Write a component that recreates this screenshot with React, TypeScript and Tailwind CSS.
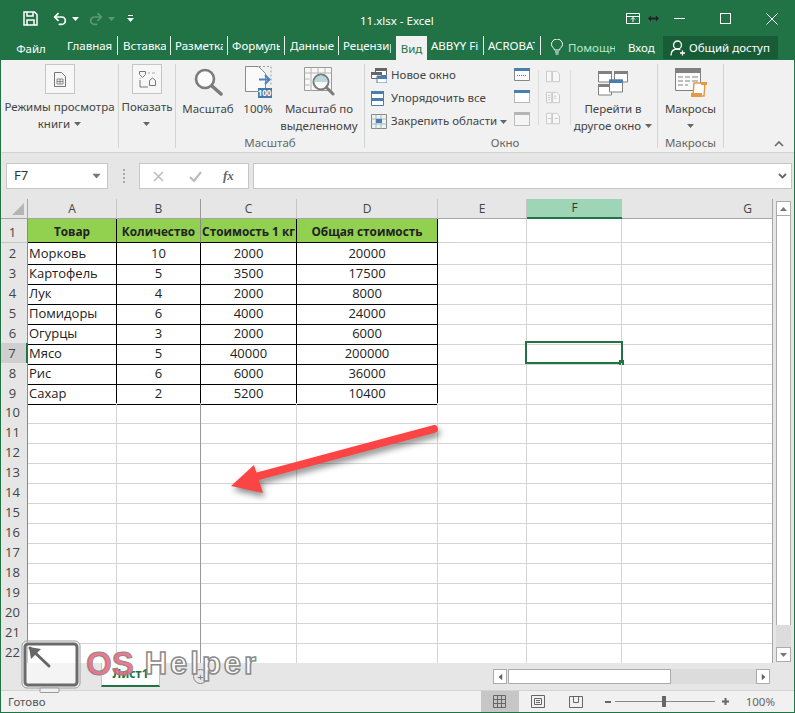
import { Redo2, Undo2 } from "lucide-react";
import type { ReactNode } from "react";

const tabs = [
  { name: "Главная", box: "w-[56px]", inner: "ml-[5px] mr-[5px]" },
  { name: "Вставка", box: "w-[53px]", inner: "ml-[5px] mr-[4px]" },
  { name: "Разметка", box: "w-[57px]", inner: "ml-[4px] mr-[4px]" },
  { name: "Формулы", box: "w-[57px]", inner: "ml-[4px] mr-[4px]" },
  { name: "Данные", box: "w-[54px]", inner: "ml-[5px] mr-[4px]" },
];

const rows: [string, number, number, number][] = [
  ["Морковь", 10, 2000, 20000],
  ["Картофель", 5, 3500, 17500],
  ["Лук", 4, 2000, 8000],
  ["Помидоры", 6, 4000, 24000],
  ["Огурцы", 3, 2000, 6000],
  ["Мясо", 5, 40000, 200000],
  ["Рис", 6, 6000, 36000],
  ["Сахар", 2, 5200, 10400],
];

const gridCols = "grid grid-cols-[27px_89px_84px_96px_141px_89px_95px_151px]";
const soft = "border-r border-b border-[#d4d4d4]";
const hard = "border-r border-b border-black";
const softLast = "border-r border-b border-r-[#d4d4d4] border-b-[#a6a6a6]";
const groupLabel = "mt-auto -mb-[2px] text-center text-[11.5px] leading-[15px] text-[#666]";

function Caret({ className = "" }: { className?: string }) {
  return (
    <svg width="7" height="4" viewBox="0 0 7 4" className={className}>
      <path d="M0 0h7L3.500 4z" fill="currentColor" />
    </svg>
  );
}

function ViewIcon() {
  return (
    <div className="flex h-[30px] w-[30px] items-center justify-center border border-[#c6c6c6] bg-[#f7f7f7]">
      <svg width="12" height="15" viewBox="0 0 12 15" fill="none" stroke="#777">
        <path d="M.5.500h7l4 4v10H.5z" />
        <path d="M3 7h6v5H3zM6 7v5M3 9.500h6" stroke="#888" />
      </svg>
    </div>
  );
}

function ShowIcon() {
  return (
    <div className="flex h-[30px] w-[30px] items-center justify-center border border-[#c6c6c6] bg-[#f7f7f7]">
      <svg width="17" height="17" viewBox="0 0 17 17" fill="none" stroke="#777">
        <path d="M.5.500h6v3L3.500 6.500.5 3.500zM10.500 9.500l3-2.500 3 2.500v5h-6zM1 9v7h8" />
        <path d="M9 2h2M13 2h3M1 7v1" stroke="#aaa" />
      </svg>
    </div>
  );
}

function ZoomIcon() {
  return (
    <svg width="29" height="28" viewBox="0 0 29 28" fill="none">
      <circle cx="11" cy="11" r="9" stroke="#7b7b7b" strokeWidth="2.600" fill="#fbfbfb" />
      <path d="M18 18l9 8" stroke="#7b7b7b" strokeWidth="3.400" strokeLinecap="round" />
    </svg>
  );
}

function HundredIcon() {
  return (
    <div className="relative h-[32px] w-[27px]">
      <svg width="27" height="32" viewBox="0 0 27 32" fill="none">
        <path d="M.5.500h13l7 7v18H.5z" stroke="#8a8a8a" fill="#fafafa" />
        <path d="M14 .5h12v20" stroke="#9a9a9a" strokeDasharray="2 2" />
        <path d="M14 13.500h10M20 9l4.500 4.500L20 18" stroke="#4a86bd" strokeWidth="2" />
      </svg>
      <span className="absolute right-0 bottom-0 flex h-[10px] w-[14px] items-center justify-center bg-[#4778a8] text-[8px] leading-none font-bold text-white">
        100
      </span>
    </div>
  );
}

function ZoomSelectionIcon() {
  return (
    <svg width="31" height="30" viewBox="0 0 31 30" fill="none">
      <path d="M.5.500h27v23H.5z" stroke="#9a9a9a" fill="#f7f7f7" />
      <path d="M.5 6h27M7 .5v23M14 .5v6M21 .5v6M.5 12h5M.5 18h5" stroke="#b4b4b4" />
      <circle cx="17" cy="15" r="7.500" stroke="#7b7b7b" strokeWidth="2" fill="#fafafa" />
      <path d="M10.500 15a6.500 6.500 0 0 1 13 0z" fill="#b9d7df" />
      <path d="M22.500 20.500l6.500 6.500" stroke="#7b7b7b" strokeWidth="3" strokeLinecap="round" />
    </svg>
  );
}

function NewWindowIcon() {
  return (
    <svg width="16" height="15" viewBox="0 0 16 15" fill="none">
      <path d="M4.500.5h11v7h-11z" stroke="#666" fill="#fff" />
      <path d="M4 0h12v3H4z" fill="#666" />
      <path d="M.5 4.500h10v6H.5z" stroke="#666" fill="#fff" />
      <path d="M0 4h11v3H0z" fill="#666" />
      <path d="M6 8h10v7H6z" fill="#fff" stroke="#4a7eb0" />
      <path d="M6 8h10v3H6z" fill="#4a7eb0" />
    </svg>
  );
}

function ArrangeIcon() {
  return (
    <svg width="13" height="15" viewBox="0 0 13 15" fill="none">
      <path d="M.5.500h12v14H.5z" stroke="#4a7eb0" fill="#fff" />
      <path d="M0 0h13v3H0zM0 7h13v3H0z" fill="#4a7eb0" />
    </svg>
  );
}

function FreezeIcon() {
  return (
    <svg width="16" height="15" viewBox="0 0 16 15" fill="none">
      <path d="M.5.500h15v14H.5z" stroke="#888" fill="#eef4f6" />
      <path d="M.5 5h15M.5 10h15M5 .5v14M10 .5v14" stroke="#a8b4b8" />
      <path d="M5 5h6v4H5z" fill="#4a7eb0" />
    </svg>
  );
}

function SplitTopIcon({ dotted }: { dotted?: boolean }) {
  return (
    <svg width="16" height="13" viewBox="0 0 16 13" fill="none">
      <path d="M.5.500h15v12H.5z" stroke={dotted ? "#777" : "#888"} fill="#fff" strokeDasharray={dotted ? "1 1" : undefined} />
      <path d="M0 0h16v3H0z" fill="#4a7eb0" />
      {!dotted && <path d="M3 7.500h10" stroke="#4a7eb0" strokeDasharray="1 1" />}
    </svg>
  );
}

function GrayWindowIcon() {
  return (
    <svg width="16" height="14" viewBox="0 0 16 14" fill="none">
      <path d="M.5.500h15v13H.5z" stroke="#bbb" fill="#f5f5f5" />
      <path d="M0 0h16v3H0z" fill="#b5b5b5" />
    </svg>
  );
}

function PagesIcon({ kind }: { kind: number }) {
  return (
    <svg width="16" height="15" viewBox="0 0 16 15" fill="none" stroke="#c4c4c4">
      <path d="M.5 1.500h6v12h-6zM7.500 1.500h5l3 3v9h-8z" fill="#f7f7f7" />
      {kind === 1 && <path d="M2 5h3M2 7.500h3M2 10h3M9 6h3M9 8.500h3" />}
      {kind === 2 && <path d="M2 7.500h4M10 7.500h4" />}
    </svg>
  );
}

function SwitchWindowIcon() {
  return (
    <svg width="30" height="26" viewBox="0 0 30 26" fill="none">
      <path d="M.5 1h13v10H.5zM16.500 1h13v10h-13zM.5 14h13v10H.5z" stroke="#808080" fill="#fff" />
      <path d="M0 0h14v3H0zM16 0h14v3H16zM0 13h14v3H0z" fill="#808080" />
      <path d="M11.500 9h13v12h-13z" stroke="#808080" fill="#fff" strokeWidth="1" />
      <path d="M11 8.500h14v3.500H11z" fill="#4a7eb0" />
    </svg>
  );
}

function MacroIcon() {
  return (
    <svg width="32" height="29" viewBox="0 0 32 29" fill="none">
      <path d="M.5.500h25v22H.5z" stroke="#808080" fill="#fafafa" />
      <path d="M0 0h26v5H0z" fill="#808080" />
      <path d="M3 9h5M10 9h5M17 9h6M3 13h5M10 13h5M17 13h6M3 17h5M10 17h3" stroke="#aaa" strokeWidth="1.500" />
      <path d="M19 15h11l-1 13H18z" fill="#fff" stroke="#e39a45" strokeWidth="1.500" />
      <path d="M16 25h11v4H16z" fill="#e39a45" />
      <path d="M26 14h6v3h-6z" fill="#e39a45" />
    </svg>
  );
}

function BigButton({ box, icon, top, bottom, caret, iconBox = "h-[36px]" }: { box: string; icon: ReactNode; top: string; bottom?: string; caret?: boolean; iconBox?: string }) {
  return (
    <div className={`flex flex-col items-center ${box}`}>
      <div className={`flex items-center justify-center ${iconBox}`}>{icon}</div>
      <div className="text-center text-[11.5px] leading-[17px] whitespace-nowrap">
        <div>{top}</div>
        {bottom && (
          <div className="flex items-center justify-center gap-[4px]">
            {bottom}
            {caret && <Caret className="text-[#666]" />}
          </div>
        )}
        {!bottom && caret && (
          <div className="flex h-[17px] items-center justify-center">
            <Caret className="text-[#666]" />
          </div>
        )}
      </div>
    </div>
  );
}

function SmallRow({ icon, label, caret }: { icon: ReactNode; label: string; caret?: boolean }) {
  return (
    <div className="flex h-[23px] items-center">
      <div className="flex w-[20px] shrink-0 justify-start">{icon}</div>
      <span className="-mt-[1px] text-[11.5px] whitespace-nowrap">{label}</span>
      {caret && <Caret className="ml-[3px] text-[#666]" />}
    </div>
  );
}

function Ribbon() {
  return (
    <div className="flex h-[93px] shrink-0 border-b border-[#d2d2d2] bg-[#f1f1f1] text-[#444]">
      <div className="my-[4px] flex w-[118px] flex-col items-center border-r border-[#d4d4d4]">
        <BigButton box="w-[117px]" icon={<ViewIcon />} iconBox="h-[34px] items-start" top="Режимы просмотра" bottom="книги" caret />
      </div>
      <div className="my-[4px] flex w-[57px] flex-col items-center border-r border-[#d4d4d4]">
        <BigButton box="w-[56px]" icon={<ShowIcon />} iconBox="h-[34px] items-start" top="Показать" caret />
      </div>
      <div className="my-[4px] flex w-[189px] flex-col border-r border-[#d4d4d4]">
        <div className="flex h-[70px] pl-[4px]">
          <BigButton box="w-[56px]" icon={<ZoomIcon />} top="Масштаб" />
          <BigButton box="w-[44px]" icon={<HundredIcon />} top="100%" />
          <BigButton box="w-[78px]" icon={<ZoomSelectionIcon />} top="Масштаб по" bottom="выделенному" />
        </div>
        <div className={groupLabel}>Масштаб</div>
      </div>
      <div className="my-[4px] flex w-[293px] flex-col border-r border-[#d4d4d4]">
        <div className="flex h-[70px]">
          <div className="w-[149px] pl-[6px]">
            <SmallRow icon={<NewWindowIcon />} label="Новое окно" />
            <SmallRow icon={<ArrangeIcon />} label="Упорядочить все" />
            <SmallRow icon={<FreezeIcon />} label="Закрепить области" caret />
          </div>
          <div className="flex w-[24px] flex-col gap-[9px] pt-[4px]">
            <SplitTopIcon />
            <SplitTopIcon dotted />
            <GrayWindowIcon />
          </div>
          <div className="mt-[6px] flex h-[55px] w-[33px] flex-col gap-[8px] border-x border-[#dcdcdc] pl-[6px]">
            <PagesIcon kind={0} />
            <PagesIcon kind={1} />
            <PagesIcon kind={2} />
          </div>
          <BigButton box="w-[84px]" icon={<SwitchWindowIcon />} iconBox="h-[36px] pt-[3px]" top="Перейти в" bottom="другое окно" caret />
        </div>
        <div className={`${groupLabel} pr-[12px]`}>Окно</div>
      </div>
      <div className="my-[4px] flex w-[66px] flex-col border-r border-[#d4d4d4]">
        <BigButton box="w-[65px]" icon={<MacroIcon />} top="Макросы" caret />
        <div className={groupLabel}>Макросы</div>
      </div>
      <div className="flex flex-1 items-end justify-end pr-[10px] pb-[5px]">
        <svg width="10" height="6" viewBox="0 0 10 6" fill="none" stroke="#666" strokeWidth="1.600">
          <path d="M1 5l4-4 4 4" />
        </svg>
      </div>
    </div>
  );
}

function FormulaBar() {
  return (
    <div className="flex h-[46px] shrink-0 items-start bg-[#e6e6e6] pt-[10px] pl-[5px]">
      <div className="flex h-[26px] w-[102px] items-center justify-between border border-[#c6c6c6] bg-white px-[7px] text-[13px] text-[#333]">
        F7
        <Caret className="scale-125 text-[#777]" />
      </div>
      <div className="flex h-[26px] w-[31px] flex-col items-center justify-center gap-[2px]">
        <i className="h-[2px] w-[2px] bg-[#aaa]" />
        <i className="h-[2px] w-[2px] bg-[#aaa]" />
        <i className="h-[2px] w-[2px] bg-[#aaa]" />
        <i className="h-[2px] w-[2px] bg-[#aaa]" />
      </div>
      <div className="flex h-[26px] w-[110px] items-center border border-[#c6c6c6] bg-white text-[#bbb]">
        <svg className="ml-[13px]" width="11" height="11" viewBox="0 0 11 11" fill="none" stroke="#bdbdbd" strokeWidth="1.600">
          <path d="M1 1l9 9M10 1l-9 9" />
        </svg>
        <svg className="ml-[25px]" width="13" height="11" viewBox="0 0 13 11" fill="none" stroke="#bdbdbd" strokeWidth="2.200">
          <path d="M1 6l4 4 7-9" />
        </svg>
        <span className="ml-[21px] [font-family:'Liberation_Serif',serif] text-[13px] font-bold text-[#666] italic">fx</span>
      </div>
      <div className="ml-[4px] flex h-[26px] w-[539px] items-center justify-end border border-[#c6c6c6] bg-white pr-[4px]">
        <svg width="9" height="6" viewBox="0 0 9 6" fill="none" stroke="#666" strokeWidth="1.800">
          <path d="M1 1l3.500 3.500L8 1" />
        </svg>
      </div>
    </div>
  );
}

function RowHead({ n, tall, selected, last }: { n: number; tall?: boolean; selected?: boolean; last?: boolean }) {
  return (
    <div
      className={`flex justify-center pr-[3px] text-[13px] text-[#444] ${tall ? "items-end" : "items-center"} ${
        selected ? "border-r-2 border-b border-r-[#217346] border-b-[#c6c6c6] bg-[#cfcfcf]" : `border-r border-b border-r-[#8a8a8a] ${last ? "border-b-[#a6a6a6]" : "border-b-[#c6c6c6]"} bg-[#e6e6e6]`
      }`}
    >
      {n}
    </div>
  );
}

function Sheet() {
  const blank = [10, 11, 12, 13, 14, 15, 16, 17, 18, 19, 20, 21, 22];
  const headCell = "flex items-center justify-center overflow-hidden border-r border-b bg-[#92d050] text-[11.8px] font-bold whitespace-nowrap text-[#222]";
  return (
    <div className="flex h-[464px] shrink-0 bg-[#e6e6e6]">
      <div className="w-[772px] [font-family:'Open_Sans',sans-serif]">
        <div className={`${gridCols} h-[20px] text-[12px] text-[#444]`}>
          <div className="relative border-r border-b border-[#a6a6a6]">
            <svg className="absolute right-[3px] bottom-[3px]" width="12" height="12" viewBox="0 0 12 12">
              <path d="M12 0v12H0z" fill="#b5b5b5" />
            </svg>
          </div>
          <div className="flex items-center justify-center border-r border-b border-r-[#c6c6c6] border-b-[#a6a6a6]">A</div>
          <div className="flex items-center justify-center border-r border-b border-r-[#9a9a9a] border-b-[#a6a6a6]">B</div>
          <div className="flex items-center justify-center border-r border-b border-r-[#c6c6c6] border-b-[#a6a6a6]">C</div>
          <div className="flex items-center justify-center border-r border-b border-r-[#c6c6c6] border-b-[#a6a6a6]">D</div>
          <div className="flex items-center justify-center border-r border-b border-r-[#c6c6c6] border-b-[#a6a6a6]">E</div>
          <div className="flex items-center justify-center border-b-2 border-[#217346] bg-[#9fd5b7] text-[#333]">F</div>
          <div className="flex items-center justify-center border-r border-b border-[#a6a6a6] pl-[101px]">G</div>
        </div>

        <div className={`${gridCols} h-[24px] bg-white text-[13px]`}>
          <RowHead n={1} tall />
          <div className={`${headCell} items-end border-black pb-[1px]`}>Товар</div>
          <div className={`${headCell} items-end border-r-[#8a8a8a] border-b-black pb-[1px]`}>Количество</div>
          <div className={`${headCell} items-end border-black pb-[1px]`}>Стоимость 1 кг</div>
          <div className={`${headCell} items-end border-black pb-[1px]`}>Общая стоимость</div>
          <div className={soft} />
          <div className={soft} />
          <div className="border-r border-b border-r-[#a6a6a6] border-b-[#d4d4d4]" />
        </div>

        {rows.map((r, i) => {
          const n = i + 2;
          return (
            <div key={r[0]} className={`${gridCols} h-[20px] bg-white text-[13px] leading-[21px] text-[#222]`}>
              <RowHead n={n} selected={n === 7} />
              <div className={`${hard} pl-[1px]`}>{r[0]}</div>
              <div className={`${hard} text-center`}>{r[1]}</div>
              <div className={`${hard} text-center`}>{r[2]}</div>
              <div className={`${hard} text-center`}>{r[3]}</div>
              <div className={soft} />
              <div className={`${soft} relative`}>
                {n === 7 && (
                  <div className="absolute top-[-2px] left-[-2px] h-[23px] w-[98px] border-2 border-[#217346]">
                    <div className="absolute right-[-3px] bottom-[-3px] h-[5px] w-[5px] bg-[#217346]" />
                  </div>
                )}
              </div>
              <div className="border-r border-b border-r-[#a6a6a6] border-b-[#d4d4d4]" />
            </div>
          );
        })}

        {blank.map((n) => (
          <div key={n} className={`${gridCols} h-[20px] bg-white text-[13px]`}>
            <RowHead n={n} last={n === 22} />
            <div className={n === 22 ? softLast : soft} />
            <div className={`border-r border-b border-r-[#9a9a9a] ${n === 22 ? "border-b-[#a6a6a6]" : "border-b-[#d4d4d4]"}`} />
            <div className={n === 22 ? softLast : soft} />
            <div className={n === 22 ? softLast : soft} />
            <div className={n === 22 ? softLast : soft} />
            <div className={n === 22 ? softLast : soft} />
            <div className={`border-r border-b border-r-[#a6a6a6] ${n === 22 ? "border-b-[#a6a6a6]" : "border-b-[#d4d4d4]"}`} />
          </div>
        ))}
      </div>

      <div className="mt-[2px] mb-[1px] ml-[3px] flex w-[15px] flex-col">
        <div className="flex h-[15px] items-center justify-center border border-[#ababab] bg-white text-[#777]">
          <Caret className="rotate-180" />
        </div>
        <div className="h-[409px] border-x border-[#ababab] bg-white" />
        <div className="flex-1 bg-[#dcdcdc]" />
        <div className="flex h-[15px] items-center justify-center border border-[#ababab] bg-white text-[#777]">
          <Caret />
        </div>
      </div>
    </div>
  );
}

function SheetTabs() {
  return (
    <div className="flex h-[27px] shrink-0 items-start bg-[#e6e6e6]">
      <div className="ml-[100px] flex h-[24px] w-[59px] items-center justify-center border-x border-b-2 border-x-[#c6c6c6] border-b-[#217346] bg-white text-[12px] font-bold text-[#217346]">
        Лист1
      </div>
      <div className="mt-[6px] ml-[33px] flex h-[15px] w-[15px] items-center justify-center rounded-full border border-[#888] text-[11px] leading-none text-[#777]">+</div>
      <div className="mt-[6px] ml-[285px] flex h-[15px] w-[277px] items-stretch">
        <div className="flex w-[14px] items-center justify-center border border-[#ababab] bg-white text-[#666]">
          <Caret className="rotate-90" />
        </div>
        <div className="ml-[1px] w-[163px] border border-[#ababab] bg-white" />
        <div className="flex-1 bg-[#dcdcdc]" />
        <div className="flex w-[14px] items-center justify-center border border-[#ababab] bg-white text-[#666]">
          <Caret className="-rotate-90" />
        </div>
      </div>
    </div>
  );
}

function StatusBar() {
  return (
    <div className="flex h-[22px] shrink-0 items-center border-t border-[#d2d2d2] bg-[#f1f1f1] text-[11.5px] text-[#555]">
      <span className="ml-[7px]">Готово</span>
      <div className="ml-auto flex h-full items-center">
        <div className="flex h-full w-[38px] items-center justify-center bg-[#c6c6c6]">
          <svg width="13" height="13" viewBox="0 0 13 13" fill="none" stroke="#666">
            <path d="M.5.500h12v12H.5zM4.500.5v12M8.500.5v12M.5 4.500h12M.5 8.500h12" />
          </svg>
        </div>
        <div className="flex w-[37px] justify-center pl-[2px]">
          <svg width="14" height="13" viewBox="0 0 14 13" fill="none" stroke="#666">
            <path d="M.5.500h13v12H.5zM3.500 3.500h7v6h-7zM5 5.500h4M5 7.500h4" />
          </svg>
        </div>
        <div className="flex w-[40px] justify-center">
          <svg width="14" height="12" viewBox="0 0 14 12" fill="none" stroke="#666">
            <path d="M.5.500h13v11H.5zM4.500.5v6h5v-6" />
          </svg>
        </div>
        <div className="ml-[9px] h-[2px] w-[6px] bg-[#666]" />
        <div className="relative ml-[4px] h-px w-[100px] bg-[#888]">
          <div className="absolute top-[-5px] left-[47px] h-[11px] w-[4px] bg-[#666]" />
        </div>
        <svg className="ml-[7px]" width="7" height="7" viewBox="0 0 7 7" stroke="#666" strokeWidth="2">
          <path d="M0 3.500h7M3.500 0v7" />
        </svg>
        <span className="mr-[19px] ml-[17px] text-[#666]">100%</span>
      </div>
    </div>
  );
}

function Watermark() {
  return (
    <div className="pointer-events-none absolute top-[639px] left-[20px] flex h-[53px] items-start">
      <svg width="62" height="53" viewBox="0 0 62 53" fill="none">
        <rect x="1" y="1" width="58" height="47" rx="5" stroke="#9a9a9a" fill="#ffffff" fillOpacity="0.55" />
        <rect x="4" y="4" width="52" height="41" rx="3" stroke="#6a6a6a" strokeWidth="3" />
        <path d="M9 8l19 18" stroke="#666" strokeWidth="3" strokeLinecap="round" />
        <path d="M8 7l12 2-10 10z" fill="#666" />
        <rect x="19" y="48" width="19" height="4.500" rx="1" stroke="#9a9a9a" fill="#f0f0f0" />
      </svg>
      <span className="mt-[5px] ml-[3px] [font-family:'Liberation_Sans',sans-serif] text-[33px] leading-[38px] font-bold text-[#f2637f]/90 [-webkit-text-stroke:1px_#8a8a8a]">OS</span>
      <span className="mt-[5px] ml-[11px] [font-family:'Liberation_Sans',sans-serif] text-[31px] leading-[38px] font-bold tracking-[3px] text-white/80 [-webkit-text-stroke:1.5px_#8a8a8a]">Helper</span>
    </div>
  );
}

function RedArrow() {
  return (
    <svg className="pointer-events-none absolute top-[418px] left-[224px] drop-shadow-[2px_4px_3px_rgba(0,0,0,0.45)]" width="222" height="80" viewBox="0 0 222 80" fill="none">
      <path d="M209 10L30 58" stroke="#fb4545" strokeWidth="8" strokeLinecap="round" />
      <path d="M6 67l23-21 9 28z" fill="#fb4545" />
    </svg>
  );
}

export default function App() {
  return (
    <div className="relative flex h-[713px] w-[795px] flex-col overflow-hidden border border-[#217346] bg-[#217346] [font-family:'Noto_Sans','Liberation_Sans',sans-serif]">
      {/* Title bar */}
      <div className="relative flex h-[35px] shrink-0 items-center text-white">
        <svg className="ml-[22px]" width="15" height="15" viewBox="0 0 15 15" fill="none" stroke="#fff" strokeWidth="1.500">
          <path d="M1 1h10.500L14 3.500V14H1z" />
          <path d="M4 1v4h6V1M4 14V9h7v5" />
        </svg>
        <Undo2 className="ml-[14px]" size={16} strokeWidth={2.600} color="#fff" />
        <Caret className="ml-[4px] text-white" />
        <Redo2 className="ml-[9px]" size={16} strokeWidth={2.600} color="#5a9a78" />
        <Caret className="ml-[4px] text-[#5a9a78]" />
        <svg className="ml-[12px]" width="7" height="7" viewBox="0 0 7 7" fill="#fff">
          <path d="M1 0h5v1H1zM0 3h7L3.500 7z" />
        </svg>
        <div className="mt-[5px] ml-[226px] text-[11.500px] whitespace-nowrap">11.xlsx - Excel</div>
        <svg className="ml-[192px]" width="14" height="11" viewBox="0 0 14 11" fill="none" stroke="#fff">
          <path d="M.5.500h13v10H.5zM.5 3.500h13M7 9V4.500M5 6.500l2-2 2 2" />
        </svg>
        <svg className="ml-[8px]" width="11" height="7" viewBox="0 0 11 7" fill="#222">
          <path d="M0 3.500L3 .5v2h5v-2l3 3-3 3v-2H3v2z" />
        </svg>
        <div className="ml-[15px] h-px w-[11px] bg-white" />
        <div className="ml-[35px] h-[11px] w-[11px] border border-white" />
        <svg className="ml-[35px]" width="12" height="12" viewBox="0 0 12 12" stroke="#fff">
          <path d="M.5.500l11 11M11.500.5l-11 11" />
        </svg>
      </div>

      {/* Tabs */}
      <div className="flex h-[24px] shrink-0 items-start text-[11.5px] leading-[19px] text-white">
        <div className="flex h-[24px] w-[61px] items-center justify-center pr-[1px]">Файл</div>
        {tabs.map((t) => (
          <div key={t.name} className={`flex h-[19px] border-r border-white/90 ${t.box}`}>
            <span className={`block overflow-hidden whitespace-nowrap ${t.inner}`}>{t.name}</span>
          </div>
        ))}
        <div className="h-[19px] w-[57px] pl-[4px]">
          <span className="block w-[48px] overflow-hidden whitespace-nowrap">Рецензирование</span>
        </div>
        <div className="flex h-[24px] w-[31px] justify-center bg-[#f1f1f1] pt-[3px] text-[#217346]">Вид</div>
        <div className="flex h-[19px] w-[57px] border-r border-white/90 pl-[4px]">
          <span className="block w-[48px] overflow-hidden whitespace-nowrap">ABBYY FineReader</span>
        </div>
        <div className="flex h-[19px] w-[57px] border-r border-white/90 pl-[4px]">
          <span className="block w-[47px] overflow-hidden whitespace-nowrap">ACROBAT</span>
        </div>
        <div className="flex h-[24px] w-[79px] items-start pt-[2px] pl-[10px] text-[#b9e6c9]">
          <svg className="mt-[1px] shrink-0" width="12" height="16" viewBox="0 0 12 16" fill="none" stroke="#fff">
            <path d="M3.500 11C3 8.500.5 8 .5 5.500a5.500 5.500 0 0 1 11 0C11.500 8 9 8.500 8.500 11zM4 13h4M4.500 15h3" />
          </svg>
          <span className="ml-[5px] block w-[47px] overflow-hidden whitespace-nowrap">Помощник</span>
        </div>
        <div className="h-[24px] w-[43px] pt-[2px] pl-[8px]">Вход</div>
        <div className="flex h-[23px] w-[115px] items-center bg-[#185c37] pl-[7px] whitespace-nowrap">
          <svg width="16" height="16" viewBox="0 0 16 16" fill="none" stroke="#fff" strokeWidth="1.300">
            <circle cx="7.500" cy="5" r="4" />
            <path d="M1 15.500c0-4 2.500-6.500 6.500-6.500 1 0 2 .2 2.800.6M12.500 10.500v5M10 13h5" />
          </svg>
          <span className="ml-[3px]">Общий доступ</span>
        </div>
      </div>

      <Ribbon />
      <FormulaBar />
      <Sheet />
      <SheetTabs />
      <StatusBar />

      <RedArrow />
      <Watermark />
    </div>
  );
}
